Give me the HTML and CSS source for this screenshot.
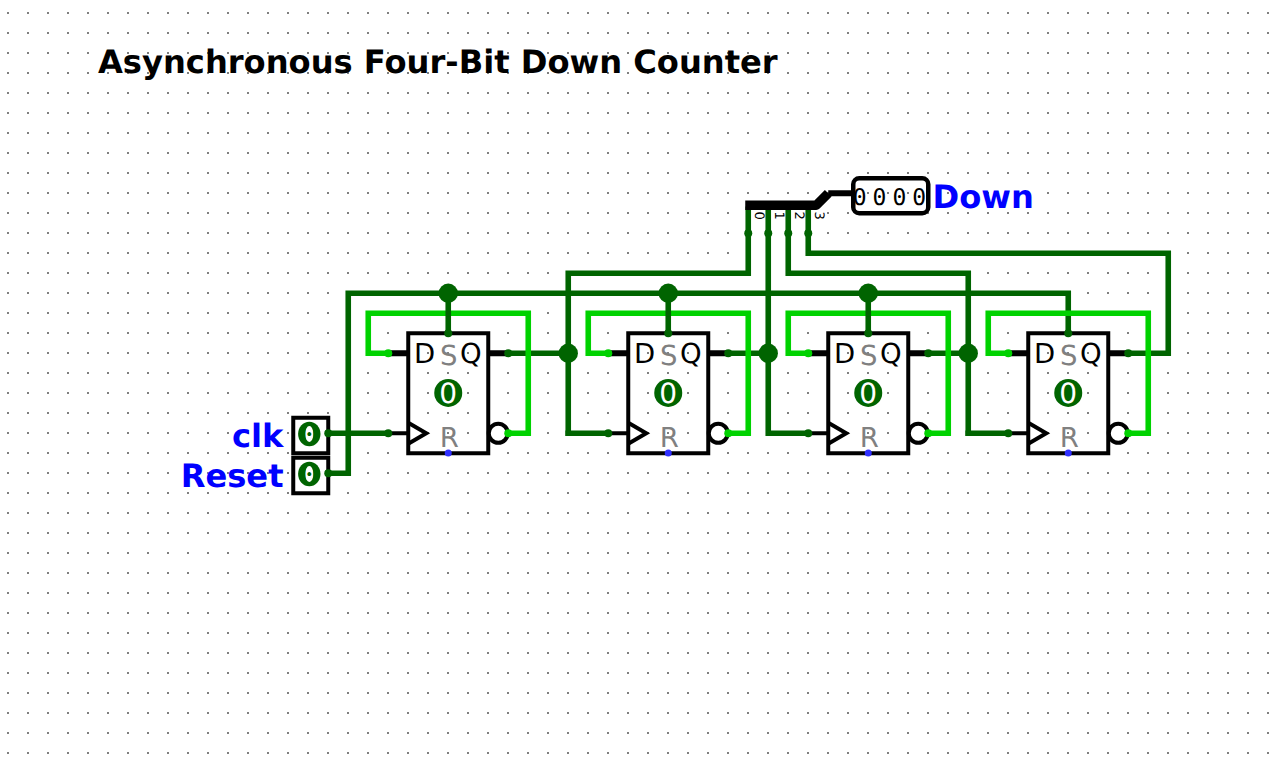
FILE: index.html
```html
<!DOCTYPE html>
<html lang="en">
<head>
<meta charset="utf-8">
<title>Asynchronous Four-Bit Down Counter</title>
<link rel="stylesheet" href="styles.css">
</head>
<body>
<svg class="canvas" width="1278" height="772" viewBox="0 0 1278 772" xmlns="http://www.w3.org/2000/svg">
  <defs>
    <pattern id="grid" x="7" y="12" width="20" height="20" patternUnits="userSpaceOnUse">
      <rect class="griddot" width="2" height="2"/>
    </pattern>
    <g id="ff">
      <rect class="box" x="0" y="0" width="80" height="120"/>
      <path class="pinline" d="M-20 20H0M80 20H100"/>
      <path class="pinline-thin" d="M-20 100H0"/>
      <path class="clock" d="M0 89.5L18 100L0 110.5"/>
      <circle class="invert" cx="90" cy="100" r="9.5"/>
      <text class="ff-letter" x="5.7" y="29.7">D</text>
      <text class="ff-letter gray" x="31.7" y="32.2">S</text>
      <text class="ff-letter" x="51.7" y="29.7">Q</text>
      <text class="ff-letter gray" x="31.4" y="113.4">R</text>
      <circle class="state" cx="40" cy="59.7" r="14"/>
      <text class="state-text" x="40" y="69.7">0</text>
      <circle class="blue" cx="40" cy="119.7" r="3.5"/>
    </g>
    <g id="in-value">
      <ellipse class="in-disc" cx="0" cy="0" rx="11.2" ry="12.2"/>
      <ellipse class="in-hole" cx="0" cy="0" rx="4.2" ry="7.9"/>
      <text class="in-digit" x="0" y="11">0</text>
    </g>
  </defs>

  <rect width="1278" height="772" fill="url(#grid)"/>

  <text class="title" x="98" y="73">Asynchronous Four-Bit Down Counter</text>

  <g transform="translate(.25 .25)">
    <use href="#ff" x="408" y="333"/>
    <use href="#ff" x="628" y="333"/>
    <use href="#ff" x="828" y="333"/>
    <use href="#ff" x="1028" y="333"/>

    <rect class="input" x="293" y="417.5" width="35" height="35.5"/>
    <rect class="input" x="293" y="457.5" width="35" height="35.5"/>

    <g class="wire-dark">
      <path d="M328 473H348V293H1068V333"/>
      <path d="M328 433H388"/>
      <path d="M508 353H568M568 433V273H748V209"/>
      <path d="M568 433H608"/>
      <path d="M728 353H768M768 209V433H808"/>
      <path d="M928 353H968M968 433V273H788V209"/>
      <path d="M968 433H1008"/>
      <path d="M1128 353H1168V253H808V209"/>
    </g>

    <g class="wire-light">
      <path d="M388 353H368V313H528V433H508"/>
      <path d="M608 353H588V313H748V433H728"/>
      <path d="M808 353H788V313H948V433H928"/>
      <path d="M1008 353H988V313H1148V433H1128"/>
    </g>

    <g class="wire-dark">
      <path d="M448 293V333M668 293V333M868 293V333"/>
    </g>

    <g class="junction">
      <circle cx="448" cy="293" r="9.7"/><circle cx="668" cy="293" r="9.7"/><circle cx="868" cy="293" r="9.7"/>
      <circle cx="568" cy="353" r="9.7"/><circle cx="768" cy="353" r="9.7"/><circle cx="968" cy="353" r="9.7"/>
    </g>

    <g class="pin-dark">
      <circle cx="448" cy="333" r="4"/><circle cx="668" cy="333" r="4"/><circle cx="868" cy="333" r="4"/><circle cx="1068" cy="333" r="4"/>
      <circle cx="508" cy="353" r="4"/><circle cx="728" cy="353" r="4"/><circle cx="928" cy="353" r="4"/><circle cx="1128" cy="353" r="4"/>
      <circle cx="388" cy="433" r="4"/><circle cx="608" cy="433" r="4"/><circle cx="808" cy="433" r="4"/><circle cx="1008" cy="433" r="4"/>
      <circle cx="328" cy="433" r="4"/><circle cx="328" cy="473" r="4"/>
      <circle cx="748" cy="233" r="4"/><circle cx="768" cy="233" r="4"/><circle cx="788" cy="233" r="4"/><circle cx="808" cy="233" r="4"/>
    </g>
    <g class="pin-light">
      <circle cx="388" cy="353" r="4"/><circle cx="608" cy="353" r="4"/><circle cx="808" cy="353" r="4"/><circle cx="1008" cy="353" r="4"/>
      <circle cx="508" cy="433" r="4"/><circle cx="728" cy="433" r="4"/><circle cx="928" cy="433" r="4"/><circle cx="1128" cy="433" r="4"/>
    </g>

    <path class="bus-thin" d="M853 193H828"/>
    <path class="bus" d="M745 205H816L828 193"/>

    <rect class="output" x="853" y="178" width="75" height="35" rx="6"/>
  </g>

  <use href="#in-value" x="309.3" y="434"/>
  <use href="#in-value" x="309.3" y="474"/>

  <text class="bit" transform="translate(754.5 211.5) rotate(90)">0</text>
  <text class="bit" transform="translate(774.5 211.5) rotate(90)">1</text>
  <text class="bit" transform="translate(794.5 211.5) rotate(90)">2</text>
  <text class="bit" transform="translate(814.5 211.5) rotate(90)">3</text>

  <text class="out-digit" x="859.7" y="205">0</text>
  <text class="out-digit" x="879.5" y="205">0</text>
  <text class="out-digit" x="899.4" y="205">0</text>
  <text class="out-digit" x="919.3" y="205">0</text>

  <text class="label" x="932.5" y="207.5">Down</text>
  <text class="label end" x="283.5" y="446.5">clk</text>
  <text class="label end" x="283.5" y="486.5">Reset</text>
</svg>
</body>
</html>
```
FILE: styles.css
```css
html, body {
  margin: 0;
  padding: 0;
  background: #fff;
  overflow: hidden;
}
.canvas { display: block; }
text { font-family: "DejaVu Sans", sans-serif; text-rendering: geometricPrecision; }
.griddot { fill: #808080; }
.title { font-size: 32.15px; font-weight: 700; fill: #000; }
.label { font-size: 32.15px; font-weight: 700; fill: #0000ff; }
.end { text-anchor: end; }
.box { fill: none; stroke: #000; stroke-width: 4; }
.pinline { fill: none; stroke: #000; stroke-width: 6; }
.pinline-thin { fill: none; stroke: #000; stroke-width: 4; }
.clock { fill: none; stroke: #000; stroke-width: 4; }
.invert { fill: none; stroke: #000; stroke-width: 4; }
.ff-letter { font-size: 27.5px; fill: #000; }
.gray { fill: #808080; }
.state { fill: #006400; }
.state-text { font-size: 28px; fill: #fff; text-anchor: middle; }
.blue { fill: #3030ff; }
.wire-light path, .wire-dark path { fill: none; stroke-width: 5.6; stroke-linecap: square; }
.wire-light path { stroke: #00d200; }
.wire-dark path { stroke: #006400; }
.junction circle { fill: #006400; }
.pin-dark circle { fill: #006400; }
.pin-light circle { fill: #00d200; }
.bus { fill: none; stroke: #000; stroke-width: 9.5; stroke-linejoin: round; }
.bus-thin { fill: none; stroke: #000; stroke-width: 6; }
.bit { font-size: 13px; fill: #000; }
.output { fill: none; stroke: #000; stroke-width: 4.5; }
.out-digit { font-family: "DejaVu Sans Mono", monospace; font-size: 23px; text-anchor: middle; fill: #000; }
.input { fill: none; stroke: #000; stroke-width: 4; }
.in-disc { fill: #006400; }
.in-hole { fill: #fff; }
.in-digit { font-family: "DejaVu Sans Mono", monospace; font-size: 30px; text-anchor: middle; fill: #006400; }
```
